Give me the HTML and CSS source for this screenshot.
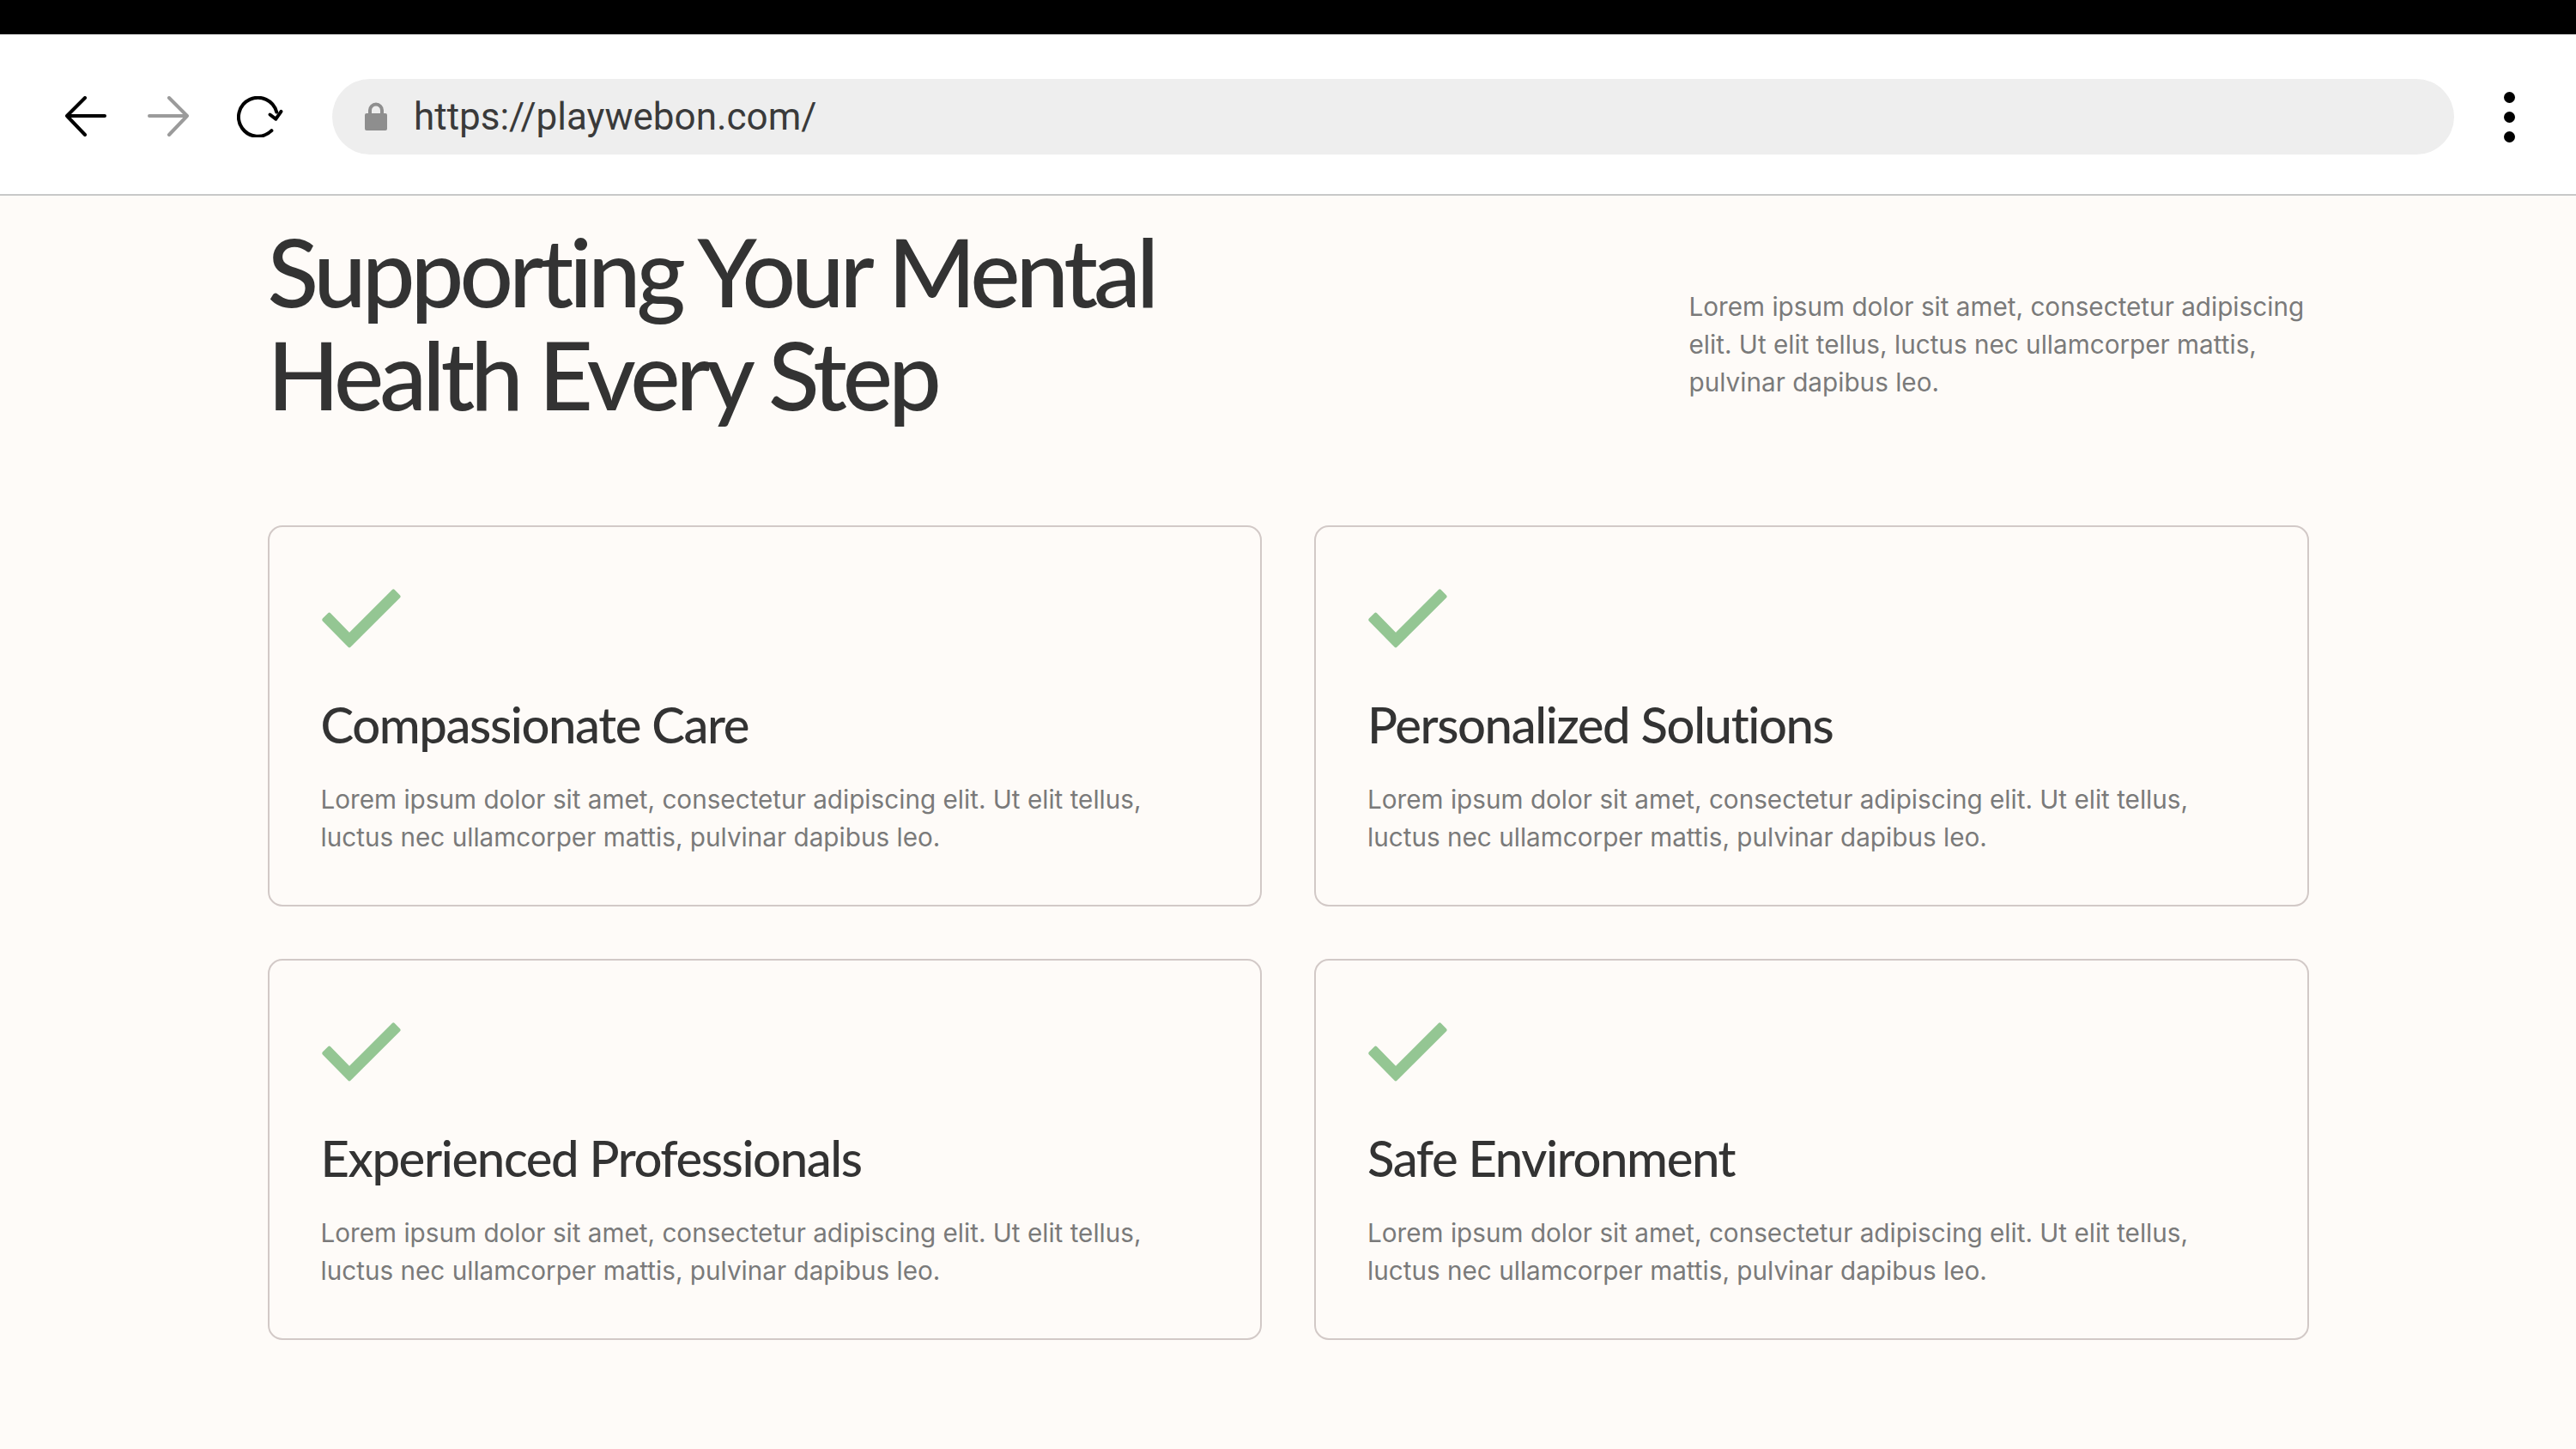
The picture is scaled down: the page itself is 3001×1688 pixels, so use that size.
FILE: index.html
```html
<!DOCTYPE html>
<html lang="en">
<head>
<meta charset="utf-8">
<title>Supporting Your Mental Health Every Step</title>
<link rel="stylesheet" href="styles.css">
</head>
<body>
<div class="statusbar"></div>
<div class="toolbar">
  <svg class="nav-icon" viewBox="0 0 48 48" width="48" height="48"><path d="M2 23 L23 2 M2 23 L23 45 M2 23 L46 23" fill="none" stroke="#000" stroke-width="4" stroke-linecap="round" stroke-linejoin="round"/></svg>
  <svg class="nav-icon fwd" viewBox="0 0 48 48" width="48" height="48"><path d="M46 23 L25 2 M46 23 L25 45 M46 23 L2 23" fill="none" stroke="#9b9b9b" stroke-width="4" stroke-linecap="round" stroke-linejoin="round"/></svg>
  <svg class="nav-icon reload" viewBox="0 0 56 48" width="56" height="48"><path d="M40.4 40.2 A22.5 22.5 0 1 1 46.2 18.5" fill="none" stroke="#000" stroke-width="4" stroke-linecap="round"/><path d="M38.5 21.5 L45.3 26.7 L51.5 17.8" fill="none" stroke="#000" stroke-width="4" stroke-linecap="round" stroke-linejoin="round"/></svg>
  <div class="urlbar">
    <svg class="lock" viewBox="0 0 26 34" width="26" height="34"><path d="M6 14 V9.5 A7 7 0 0 1 20 9.5 V14" fill="none" stroke="#8e8e8e" stroke-width="4"/><rect x="0" y="13" width="26" height="20" rx="2" fill="#8e8e8e"/></svg>
    <span class="url">https://playwebon.com/</span>
  </div>
  <div class="menu"><span></span><span></span><span></span></div>
</div>

<main class="page">
  <header class="intro">
    <h1 class="intro-title">Supporting Your Mental Health Every Step</h1>
    <p class="intro-text">Lorem ipsum dolor sit amet, consectetur adipiscing elit. Ut elit tellus, luctus nec ullamcorper mattis, pulvinar dapibus leo.</p>
  </header>

  <section class="cards">
    <article class="card">
      <svg class="check" viewBox="0 0 98 78" width="98" height="78"><polygon points="11.59,32.63 35,56.64 86.31,5.43 92.67,11.79 35,69.36 5.23,38.99" fill="#94c693" stroke="#94c693" stroke-width="4" stroke-linejoin="round"/></svg>
      <h2 class="card-title">Compassionate Care</h2>
      <p class="card-text">Lorem ipsum dolor sit amet, consectetur adipiscing elit. Ut elit tellus, luctus nec ullamcorper mattis, pulvinar dapibus leo.</p>
    </article>
    <article class="card">
      <svg class="check" viewBox="0 0 98 78" width="98" height="78"><polygon points="11.59,32.63 35,56.64 86.31,5.43 92.67,11.79 35,69.36 5.23,38.99" fill="#94c693" stroke="#94c693" stroke-width="4" stroke-linejoin="round"/></svg>
      <h2 class="card-title">Personalized Solutions</h2>
      <p class="card-text">Lorem ipsum dolor sit amet, consectetur adipiscing elit. Ut elit tellus, luctus nec ullamcorper mattis, pulvinar dapibus leo.</p>
    </article>
    <article class="card">
      <svg class="check" viewBox="0 0 98 78" width="98" height="78"><polygon points="11.59,32.63 35,56.64 86.31,5.43 92.67,11.79 35,69.36 5.23,38.99" fill="#94c693" stroke="#94c693" stroke-width="4" stroke-linejoin="round"/></svg>
      <h2 class="card-title">Experienced Professionals</h2>
      <p class="card-text">Lorem ipsum dolor sit amet, consectetur adipiscing elit. Ut elit tellus, luctus nec ullamcorper mattis, pulvinar dapibus leo.</p>
    </article>
    <article class="card">
      <svg class="check" viewBox="0 0 98 78" width="98" height="78"><polygon points="11.59,32.63 35,56.64 86.31,5.43 92.67,11.79 35,69.36 5.23,38.99" fill="#94c693" stroke="#94c693" stroke-width="4" stroke-linejoin="round"/></svg>
      <h2 class="card-title">Safe Environment</h2>
      <p class="card-text">Lorem ipsum dolor sit amet, consectetur adipiscing elit. Ut elit tellus, luctus nec ullamcorper mattis, pulvinar dapibus leo.</p>
    </article>
  </section>
</main>
</body>
</html>
```

FILE: styles.css
```css
* { box-sizing: border-box; }

html, body {
  margin: 0;
  padding: 0;
}

body {
  background: #fefbf8;
  font-family: "Inter", "Liberation Sans", sans-serif;
  min-height: 1688px;
}

.statusbar {
  height: 40px;
  background: #000;
}

.toolbar {
  height: 188px;
  background: #fff;
  border-bottom: 2px solid #c8c8c8;
  display: flex;
  align-items: center;
  padding: 6px 71px 0 76px;
}

.nav-icon { display: block; flex: none; }
.fwd { margin-left: 48px; }
.reload { margin-left: 56px; }

.urlbar {
  margin-left: 55px;
  flex: 1;
  height: 88px;
  border-radius: 44px;
  background: #eeeeee;
  display: flex;
  align-items: center;
  padding-left: 38px;
}

.lock { display: block; flex: none; }

.url {
  margin-left: 31px;
  font-family: "Roboto", "Liberation Sans", sans-serif;
  font-size: 44px;
  color: #3a3a3a;
}

.menu {
  margin-left: 58px;
  width: 13px;
  display: flex;
  flex-direction: column;
  gap: 10px;
}

.menu span {
  display: block;
  width: 13px;
  height: 13px;
  border-radius: 50%;
  background: #000;
}

.page {
  width: 2378px;
  margin: 0 auto;
  padding-top: 27px;
}

.intro {
  display: flex;
  align-items: flex-start;
}

.intro-title {
  margin: 0;
  width: 1150px;
  font-family: "Lato", "Open Sans", sans-serif;
  font-weight: 500;
  font-size: 110px;
  line-height: 120px;
  color: #333333;
  letter-spacing: -5px;
}

.intro-text {
  margin: 80px 0 0 auto;
  width: 722px;
  font-size: 29.7px;
  line-height: 44px;
  color: #7a7a7a;
}

.cards {
  margin-top: 117px;
  display: grid;
  grid-template-columns: 1fr 1fr;
  gap: 61px;
}

.card {
  height: 444px;
  border: 2px solid #d2c9c7;
  border-radius: 17px;
  padding: 69px 58px 0 60px;
}

.check { display: block; margin-left: -2px; }

.card-title {
  margin: 48px 0 0;
  font-family: "Lato", "Open Sans", sans-serif;
  font-weight: 500;
  font-size: 58px;
  line-height: 70px;
  color: #333333;
  letter-spacing: -1.4px;
}

.card-text {
  margin: 30px 0 0;
  font-size: 29.7px;
  line-height: 44px;
  color: #7a7a7a;
}
```
